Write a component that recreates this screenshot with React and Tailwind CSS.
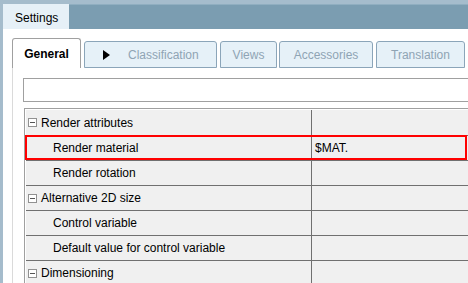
export default function App() {
  const rows = [
    { g: true, t: "Render attributes" },
    { t: "Render material", v: "$MAT.", sel: true },
    { t: "Render rotation" },
    { g: true, t: "Alternative 2D size" },
    { t: "Control variable" },
    { t: "Default value for control variable" },
    { g: true, t: "Dimensioning" },
  ];
  return (
    <div className="w-[468px] h-[283px] overflow-hidden bg-[#a5bccc] pl-[3px] pt-[4px] flex flex-col font-['Liberation_Sans',Arial,sans-serif] text-[12px] text-black leading-none">
      <div className="flex h-[25px] shrink-0">
        <div className="w-[66px] shrink-0 bg-[#e6f0f7] pl-[12px] pt-[2px] flex items-center">Settings</div>
        <div className="flex-1 bg-[#7b9db1] border-t border-[#90aec0]" />
      </div>
      <div className="flex-1 bg-white pl-[9px] pt-[9px] flex flex-col min-h-0">
        <div className="flex items-start h-[30px] shrink-0">
          <div className="w-[69px] h-[30px] shrink-0 border border-b-0 border-[#a0a0a0] rounded-t-[3px] bg-white font-bold flex items-center justify-center pt-[1px]">
            General
          </div>
          <div className="ml-[3px] mt-[3px] w-[133px] h-[27px] shrink-0 border border-[#8ba5b9] rounded-t-[3px] bg-[#e6f1f8] flex items-center pl-[18px] pt-[1px] text-[#8fa4b4]">
            <svg width="7" height="10" viewBox="0 0 7 10" className="shrink-0">
              <path d="M0 0 L7 5 L0 10 Z" fill="#000" />
            </svg>
            <span className="ml-[18px]">Classification</span>
          </div>
          <div className="ml-[3px] mt-[3px] w-[57px] h-[27px] shrink-0 border border-[#8ba5b9] rounded-t-[3px] bg-[#e6f1f8] flex items-center justify-center pt-[1px] text-[#8fa4b4]">
            Views
          </div>
          <div className="ml-[2px] mt-[3px] w-[94px] h-[27px] shrink-0 border border-[#8ba5b9] rounded-t-[3px] bg-[#e6f1f8] flex items-center justify-center pt-[1px] text-[#8fa4b4]">
            Accessories
          </div>
          <div className="ml-[3px] mt-[3px] w-[89px] h-[27px] shrink-0 border border-[#8ba5b9] rounded-t-[3px] bg-[#e6f1f8] flex items-center justify-center pt-[1px] text-[#8fa4b4]">
            Translation
          </div>
        </div>
        <div className="flex-1 border-l border-[#dadada] pl-[10px] pt-[10px] w-[520px] shrink-0">
          <div className="w-[480px] h-[24px] border border-[#a0a0a0] bg-white" />
          <div className="mt-[6px] ml-px w-[480px] border-t border-l border-[#a0a0a0] pt-px pl-px">
            {rows.map((r, i) => (
              <div
                key={i}
                className={`relative flex ${i === 0 ? "h-[26px]" : "h-[25px]"} border-b border-[#707070] bg-[#f0f0f0]`}
              >
                <div className="w-[286px] shrink-0 border-r border-[#707070] flex items-center">
                  {r.g ? (
                    <div className="flex items-center pl-[2px]">
                      <svg width="9" height="9" viewBox="0 0 9 9" className="shrink-0">
                        <rect x="0.5" y="0.5" width="8" height="8" fill="#fff" stroke="#919191" />
                        <path d="M2 4.5 H7" stroke="#555" strokeWidth="1" />
                      </svg>
                      <span className="ml-[4px]">{r.t}</span>
                    </div>
                  ) : (
                    <span className="pl-[27px]">{r.t}</span>
                  )}
                </div>
                <div className="flex-1 flex items-center pl-[3px]">{r.v || ""}</div>
                {r.sel && (
                  <div className="absolute top-[-1px] left-[-1px] w-[442px] h-[25px] border-2 border-[#ff0000]" />
                )}
              </div>
            ))}
          </div>
        </div>
      </div>
    </div>
  );
}
